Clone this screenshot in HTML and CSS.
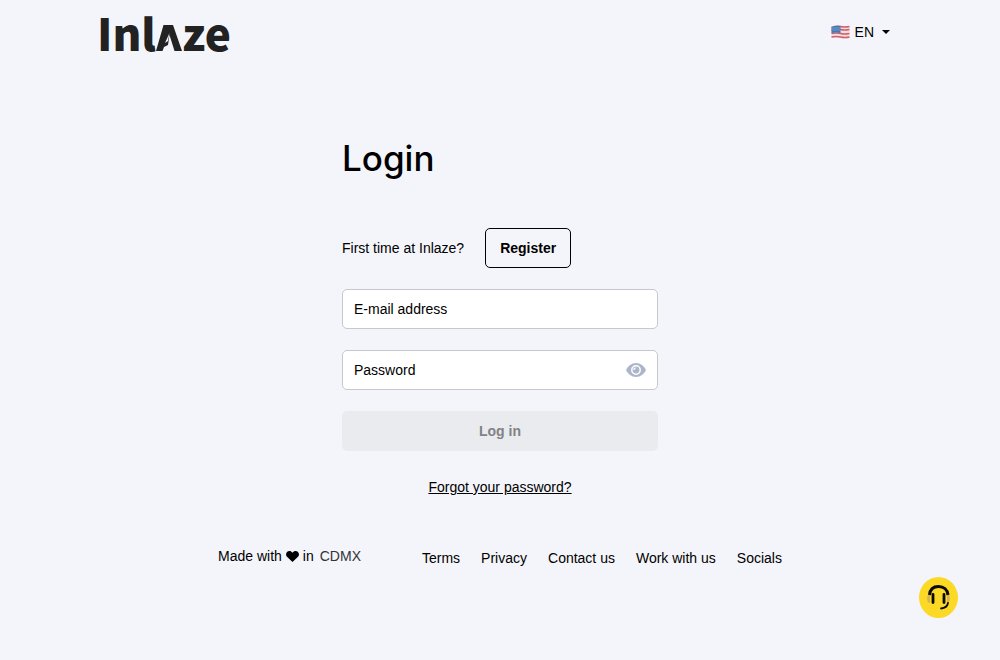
FILE: index.html
```html
<!DOCTYPE html>
<html lang="en">
<head>
<meta charset="utf-8">
<meta name="viewport" content="width=device-width, initial-scale=1">
<title>Inlaze</title>
<link rel="stylesheet" href="styles.css">
</head>
<body>
<header class="header">
  <a class="logo" href="#" aria-label="Inlaze"><span>Inl</span><svg class="logo-mark" viewBox="0 0 26 27" width="26" height="27" aria-hidden="true"><path d="M7.500 1h9.500l9 26h-7.500L13.500 11l-1.500 10-4 2-1.500 4H0z" fill="#222"/><path d="M13.500 9L9 19l3-2z" fill="#f4f5fa"/></svg><span>ze</span></a>
  <button class="language" type="button">
    <svg width="19" height="14" viewBox="0 0 18 14" aria-hidden="true">
      <path d="M0 2q5-2 9-1t9 0v12q-5 1-9 0t-9 0z" fill="#f3dfe1"/>
      <path d="M0 2.500q5-2 9-1t9 0M0 5.500q5-2 9-1t9 0M0 8.500q5-1 9 0t9 0M0 12q5-1 9 0t9 0" fill="none" stroke="#d2606a" stroke-width="1.500"/>
      <path d="M0 2q5-2 9-1v7q-4-1-9 0z" fill="#4378b5"/>
      <path d="M1 3h7M1 5h7" stroke="#9dbbdc" stroke-width="1" stroke-dasharray="1 1"/>
    </svg>
    <span>EN</span>
    <svg class="caret" width="8" height="4" viewBox="0 0 8 4" aria-hidden="true"><path d="M0 0h8L4 4z"/></svg>
  </button>
</header>
<main class="login">
  <h1 class="title">Login</h1>
  <form class="form">
    <div class="register-row">
      <span>First time at Inlaze?</span>
      <button class="register" type="button">Register</button>
    </div>
    <input class="input" type="email" aria-label="E-mail address" placeholder="E-mail address">
    <div class="password">
      <input class="input" type="password" aria-label="Password" placeholder="Password">
      <button class="reveal" type="button" aria-label="Show password">
        <svg width="20" height="14" viewBox="0 0 20 14" aria-hidden="true"><path d="M0 7C2 3 5.500 0 10 0s8 3 10 7c-2 4-5.500 7-10 7S2 11 0 7z" fill="#adb5cb"/><circle cx="10" cy="7" r="4.200" fill="#adb5cb" stroke="#fff" stroke-width="1.500"/><path d="M9 4.500a2 2 0 0 1-1.500 2" fill="none" stroke="#fff" stroke-width="1.500"/></svg>
      </button>
    </div>
    <button class="submit" type="submit" disabled>Log in</button>
    <a class="forgot" href="#">Forgot your password?</a>
  </form>
</main>
<footer class="footer">
  <p class="made"><span>Made with</span><svg width="13" height="11" viewBox="0 0 13 11" aria-hidden="true"><path d="M6.500 11L1 5.800C-.4 4.400-.2 2 1.200.8 2.600-.4 4.900-.2 6 1.200l.5.600.5-.6C8.100-.2 10.400-.4 11.800.8 13.200 2 13.400 4.400 12 5.800z"/></svg><span>in</span><span class="city">CDMX</span></p>
  <nav class="links">
    <a href="#">Terms</a>
    <a href="#">Privacy</a>
    <a href="#">Contact us</a>
    <a href="#">Work with us</a>
    <a href="#">Socials</a>
  </nav>
</footer>
<button class="support" type="button" aria-label="Support">
  <svg width="39" height="41" viewBox="0 0 39 41" aria-hidden="true">
    <ellipse cx="19.500" cy="20.500" rx="19.500" ry="20.500" fill="#fbd925"/>
    <path d="M11 17h-1q-2 1-2 4.500t2 4.500h1zM28 17h1q2 1 2 4.500t-2 4.500h-1z" fill="#d5b552"/>
    <path d="M10.500 18C11 12.500 14.500 9.500 19.500 9.500S28.500 12.500 29 18" fill="none" stroke="#0b0b08" stroke-width="3"/>
    <path d="M14 17.500v8M25 17.500v8" stroke="#0b0b08" stroke-width="2.800" stroke-linecap="round"/>
    <path d="M29 26q-1 5-7 5.500" fill="none" stroke="#0b0b08" stroke-width="1.800" stroke-linecap="round"/>
  </svg>
</button>
</body>
</html>
```
FILE: styles.css
```css
* {
  box-sizing: border-box;
}

body {
  margin: 0;
  background: #f4f5fa;
  color: #000;
  font: 14px/20px "Liberation Sans", Arial, sans-serif;
}

button,
input {
  font: inherit;
  color: inherit;
}

button {
  padding: 0;
  border: 0;
  background: none;
  cursor: pointer;
}

svg {
  display: block;
}

a {
  color: inherit;
  text-decoration: none;
}

.header {
  display: flex;
  align-items: flex-start;
  justify-content: space-between;
  padding: 0 110px 0 97px;
}

.logo {
  display: flex;
  align-items: baseline;
  color: #222;
  font: 900 44px/64px "Noto Sans CJK SC", sans-serif;
}

.language {
  display: flex;
  align-items: center;
  gap: 5px;
  padding-top: 22px;
}

.caret {
  margin-left: 3px;
}

.login {
  width: 100%;
  max-width: 316px;
  margin: 0 auto;
  padding-top: 71px;
}

.title {
  margin: 0;
  font: 500 35px/46px Inter, sans-serif;
}

.form {
  display: flex;
  flex-direction: column;
  gap: 21px;
  padding-top: 47px;
}

.register-row {
  display: flex;
  align-items: center;
  gap: 21px;
}

.register {
  height: 40px;
  padding: 0 14px;
  border: 1px solid #000;
  border-radius: 5px;
  font-weight: 700;
}

.input {
  display: block;
  width: 100%;
  height: 40px;
  padding: 0 11px;
  border: 1px solid #c7c8cd;
  border-radius: 5px;
  background: #fff;
}

.input::placeholder {
  color: #000;
  opacity: 1;
}

.password {
  position: relative;
}

.reveal {
  position: absolute;
  top: 13px;
  right: 12px;
}

.submit {
  height: 40px;
  border-radius: 5px;
  background: #eaebef;
  color: #818286;
  font-weight: 700;
}

.forgot {
  align-self: center;
  margin-top: 5px;
  text-decoration: underline;
}

.footer {
  display: flex;
  justify-content: center;
  gap: 61px;
  padding-top: 49px;
}

.made {
  display: flex;
  align-items: center;
  gap: 4px;
  height: 20px;
  margin: 0;
}

.city {
  margin-left: 2px;
  color: #333;
}

.links {
  display: flex;
  gap: 21px;
  padding-top: 2px;
}

.support {
  position: fixed;
  right: 42px;
  bottom: 42px;
}
```
